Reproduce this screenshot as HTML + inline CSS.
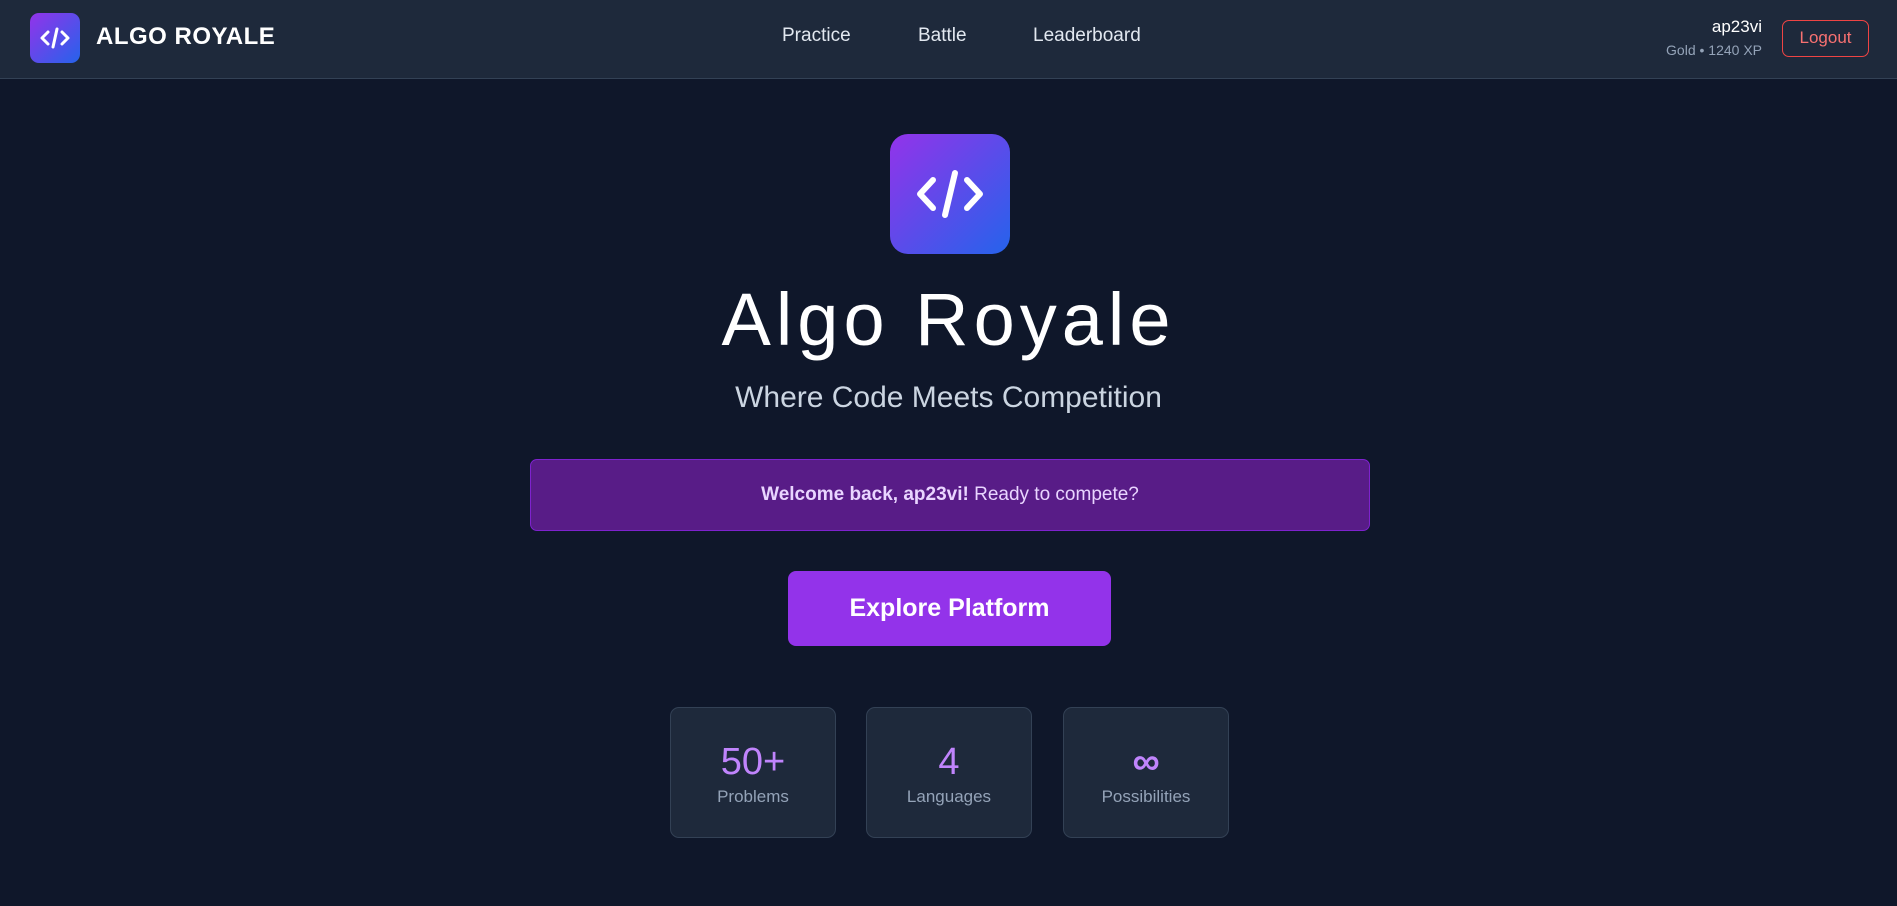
<!DOCTYPE html>
<html><head><meta charset="utf-8"><style>
*{margin:0;padding:0;box-sizing:border-box}
body{width:1897px;height:906px;background:#0f172a;font-family:"Liberation Sans",sans-serif;color:#fff;overflow:hidden;position:relative}
.nav{position:absolute;left:0;top:0;width:1897px;height:79px;background:#1e293b;border-bottom:1px solid #334155}
.logo{position:absolute;left:30px;top:13px;width:50px;height:50px;border-radius:9px;background:linear-gradient(135deg,#9333ea,#2563eb)}
.brand{position:absolute;left:96px;top:23px;font-size:24px;font-weight:bold;letter-spacing:0.5px}
.link{position:absolute;top:25px;font-size:19px;color:#e2e8f0}
.user{position:absolute;right:135px;top:17px;text-align:right}
.user .n{font-size:17px;color:#fff}
.user .g{font-size:14px;color:#94a3b8;margin-top:5px}
.logout{position:absolute;left:1782px;top:20px;width:87px;height:37px;border:1.5px solid #ef4444;border-radius:7px;color:#f87171;font-size:17px;text-align:center;line-height:34px}
.hero{position:absolute;left:890px;top:134px;width:120px;height:120px;border-radius:18px;background:linear-gradient(135deg,#9333ea,#2563eb)}
.title{position:absolute;left:0;width:1897px;text-align:center;top:277px;font-size:74px;letter-spacing:5px}
.sub{position:absolute;left:0;width:1897px;text-align:center;top:381px;font-size:30px;color:#cbd5e1}
.welcome{position:absolute;left:530px;top:459px;width:840px;height:72px;background:#581c87;border:1px solid #7e22ce;border-radius:7px;text-align:center;line-height:70px;font-size:19px;color:#e9d5ff}
.btn{position:absolute;left:788px;top:571px;width:323px;height:75px;background:#9333ea;border-radius:8px;text-align:center;line-height:75px;font-size:25px;font-weight:bold}
.card{position:absolute;top:707px;width:166px;height:131px;background:#1e293b;border:1px solid #334155;border-radius:9px;text-align:center}
.card .v{margin-top:33px;font-size:38px;color:#c084fc;height:44px}
.card .l{margin-top:2px;font-size:17px;color:#94a3b8}
</style></head><body>
<div class="nav">
<div class="logo"><svg width="50" height="50" viewBox="0 0 50 50" fill="none" stroke="#fff" stroke-width="3" stroke-linecap="round" stroke-linejoin="round"><path d="M18 19l-6 6 6 6M32 19l6 6-6 6M27 16l-4 18"/></svg></div>
<div class="brand">ALGO ROYALE</div>
<div class="link" style="left:782px">Practice</div>
<div class="link" style="left:918px">Battle</div>
<div class="link" style="left:1033px">Leaderboard</div>
<div class="user"><div class="n">ap23vi</div><div class="g">Gold • 1240 XP</div></div>
<div class="logout">Logout</div>
</div>
<div class="hero"><svg width="120" height="120" viewBox="0 0 120 120" fill="none" stroke="#fff" stroke-width="6" stroke-linecap="round" stroke-linejoin="round"><path d="M43 46l-13 14 13 14M77 46l13 14-13 14M65 39l-10 42"/></svg></div>
<div class="title">Algo Royale</div>
<div class="sub">Where Code Meets Competition</div>
<div class="welcome"><b>Welcome back, ap23vi!</b> Ready to compete?</div>
<div class="btn">Explore Platform</div>
<div class="card" style="left:670px"><div class="v">50+</div><div class="l">Problems</div></div>
<div class="card" style="left:866px"><div class="v">4</div><div class="l">Languages</div></div>
<div class="card" style="left:1063px"><div class="v" style="font-weight:bold">∞</div><div class="l">Possibilities</div></div>
</body></html>
